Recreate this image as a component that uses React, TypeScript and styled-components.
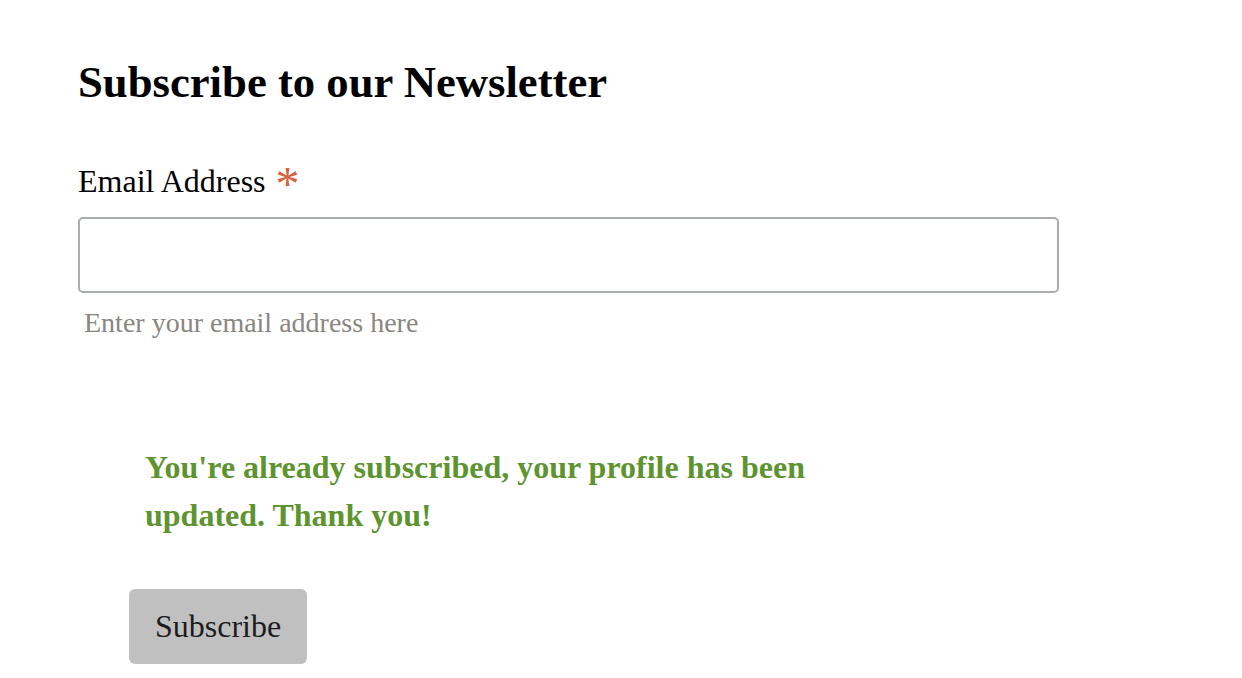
import React from "react";
import styled, { createGlobalStyle } from "styled-components";

const Global = createGlobalStyle`
  html, body { margin: 0; padding: 0; background: #ffffff; }
  body { font-family: "Liberation Serif", "Times New Roman", serif; color: #000; }
`;

const Page = styled.div`
  padding: 57px 0 0 78px;
  width: 981px;
`;

const Heading = styled.h2`
  margin: 0;
  font-size: 44.7px;
  line-height: 51px;
  font-weight: 700;
`;

const Form = styled.form`
  display: flex;
  flex-direction: column;
  margin-top: 55px;
`;

const Label = styled.label`
  font-size: 32px;
  line-height: 37px;
  display: flex;
  align-items: flex-start;
  gap: 10px;
`;

const Required = styled.span`
  color: #d9603b;
  font-size: 48px;
  line-height: 37px;
  position: relative;
  top: 2px;
`;

const Input = styled.input`
  box-sizing: border-box;
  margin-top: 17px;
  width: 981px;
  height: 76px;
  border: 2px solid #aaadb0;
  border-radius: 5px;
  background: #fff;
  font-family: inherit;
  font-size: 28px;
  padding: 0 14px;
  outline: none;
`;

const Helper = styled.div`
  margin-top: 14px;
  padding-left: 6px;
  font-size: 28px;
  line-height: 32px;
  color: #8a8680;
`;

const Message = styled.div`
  margin: 104px 0 0 67px;
  width: 720px;
  font-size: 32px;
  line-height: 48px;
  font-weight: 700;
  color: #5e9430;
`;

const Button = styled.button`
  align-self: flex-start;
  margin: 50px 0 0 51px;
  height: 75px;
  padding: 0 26px;
  border: none;
  border-radius: 6px;
  background: #c0c0c0;
  color: #1c1c1c;
  font-family: "Liberation Serif", "Times New Roman", serif;
  font-size: 32px;
  cursor: pointer;
`;

export default function App() {
  return (
    <>
      <Global />
      <Page>
        <Heading>Subscribe to our Newsletter</Heading>
        <Form onSubmit={(e) => e.preventDefault()}>
          <Label htmlFor="email">
            Email Address <Required>*</Required>
          </Label>
          <Input id="email" type="email" />
          <Helper>Enter your email address here</Helper>
          <Message>You're already subscribed, your profile has been updated. Thank you!</Message>
          <Button type="submit">Subscribe</Button>
        </Form>
      </Page>
    </>
  );
}
